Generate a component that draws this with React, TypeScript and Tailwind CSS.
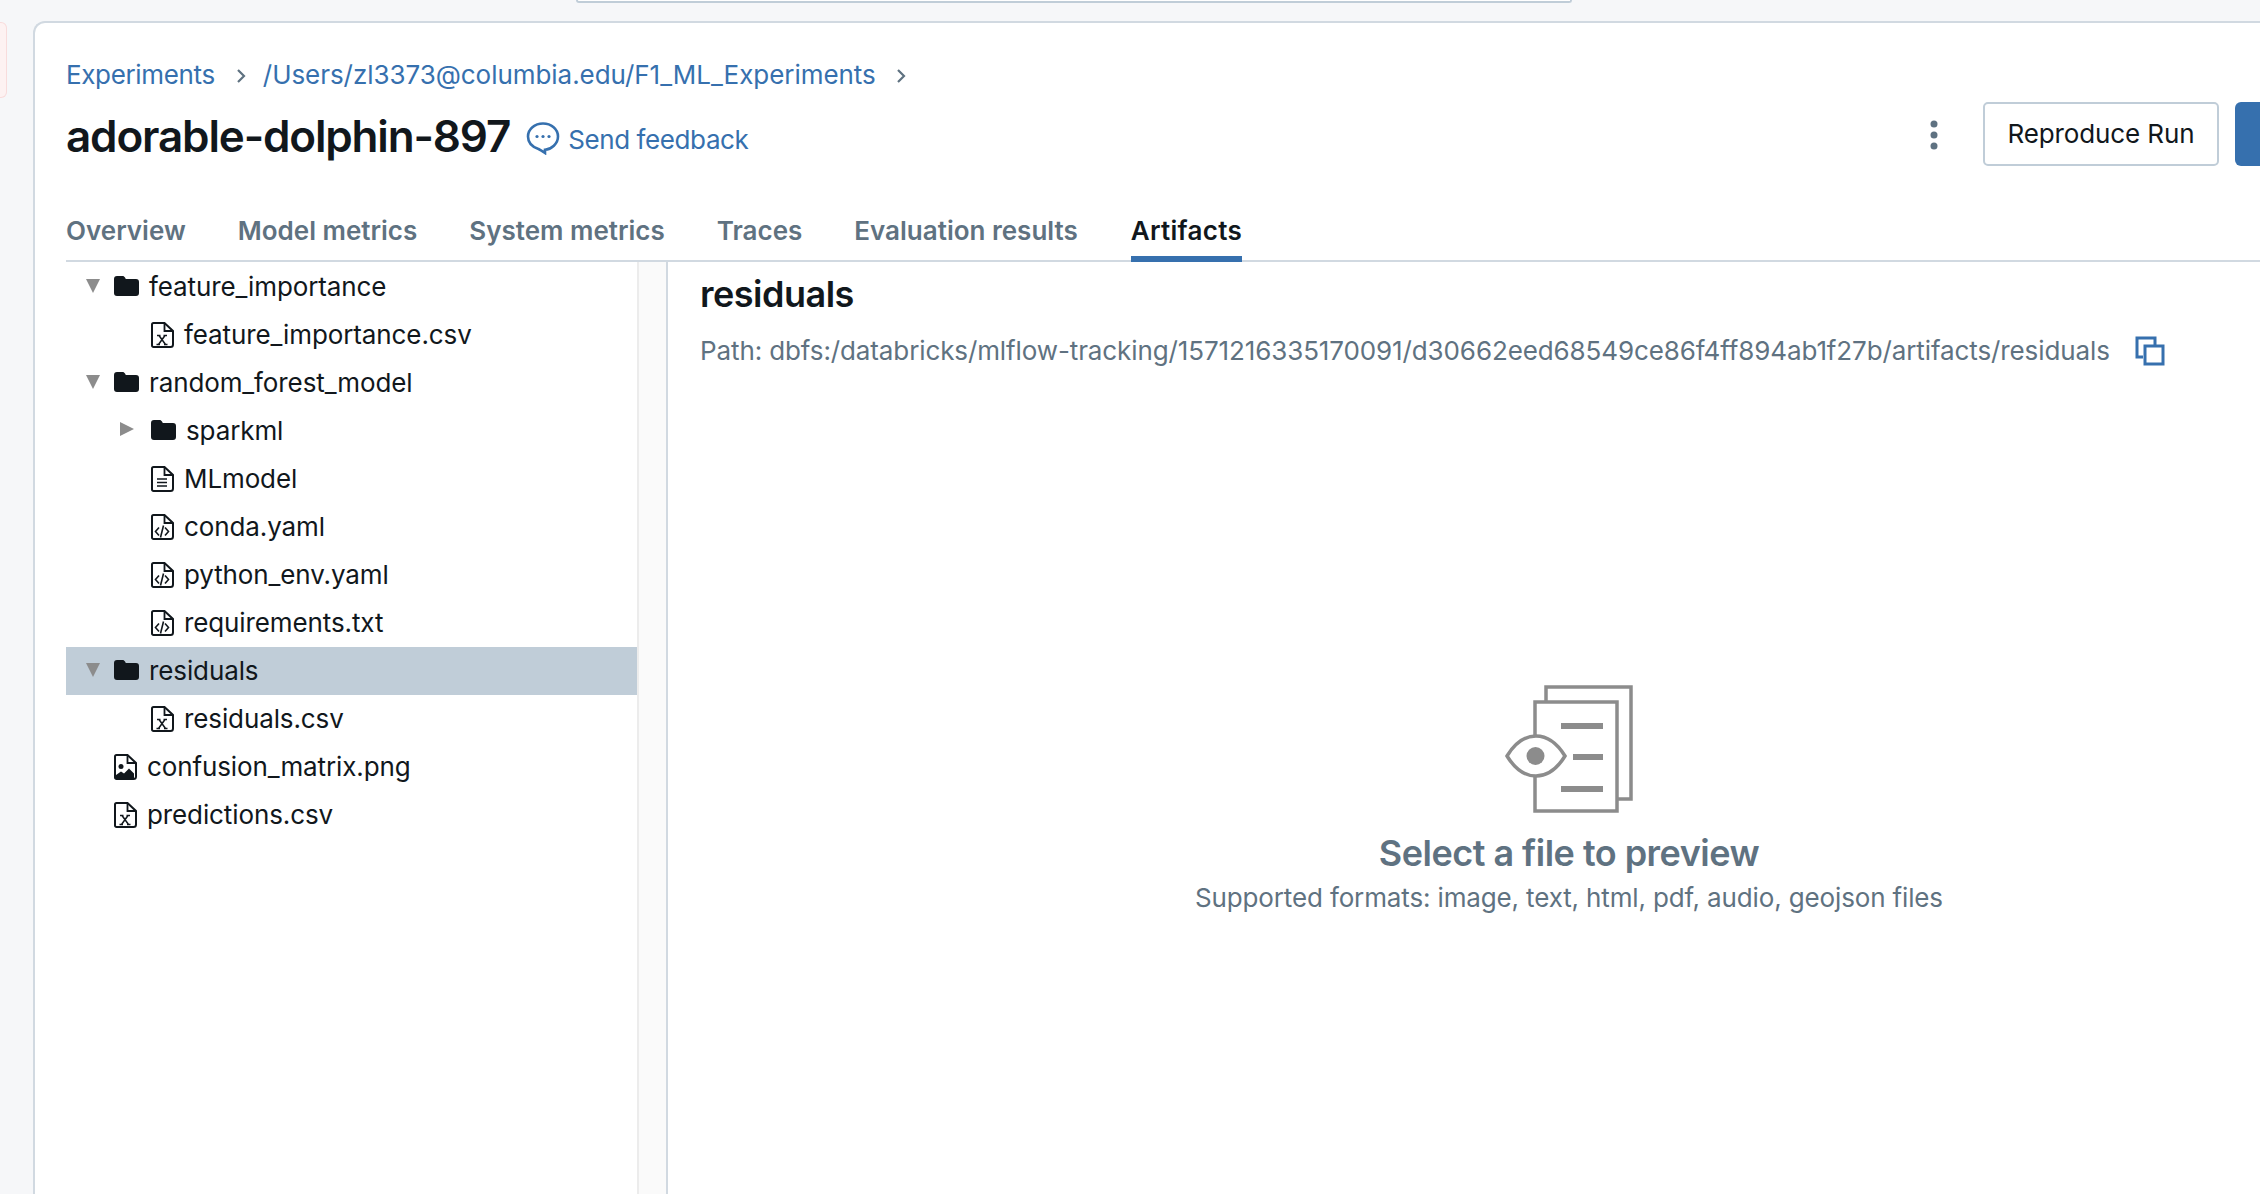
import type { ReactNode } from "react";

type FileKind = "csv" | "text" | "code" | "image";

type TreeRow = {
  name: string;
  kind: "open" | "closed" | FileKind;
  depth: number;
  selected?: boolean;
};

const TABS = ["Overview", "Model metrics", "System metrics", "Traces", "Evaluation results", "Artifacts"];

const ROWS: TreeRow[] = [
  { name: "feature_importance", kind: "open", depth: 0 },
  { name: "feature_importance.csv", kind: "csv", depth: 1 },
  { name: "random_forest_model", kind: "open", depth: 0 },
  { name: "sparkml", kind: "closed", depth: 1 },
  { name: "MLmodel", kind: "text", depth: 1 },
  { name: "conda.yaml", kind: "code", depth: 1 },
  { name: "python_env.yaml", kind: "code", depth: 1 },
  { name: "requirements.txt", kind: "code", depth: 1 },
  { name: "residuals", kind: "open", depth: 0, selected: true },
  { name: "residuals.csv", kind: "csv", depth: 1 },
  { name: "confusion_matrix.png", kind: "image", depth: 0 },
  { name: "predictions.csv", kind: "csv", depth: 0 },
];

function Chevron() {
  return (
    <svg width="12" height="18" viewBox="0 0 12 18" fill="none" stroke="#5f7281" strokeWidth="2.2">
      <path d="M3 3l6 6-6 6" />
    </svg>
  );
}

function FolderIcon() {
  return (
    <svg width="25" height="20" viewBox="0 0 25 20" fill="#11171c" className="shrink-0">
      <path d="M3 0h5.5c1.2 0 1.9.6 2.5 1.6l.8 1.4H22a3 3 0 0 1 3 3v11a3 3 0 0 1-3 3H3a3 3 0 0 1-3-3V3a3 3 0 0 1 3-3z" />
    </svg>
  );
}

function FileIcon({ kind }: { kind: FileKind }) {
  let inner: ReactNode = null;
  if (kind === "csv") {
    inner = (
      <path d="M6 13.500h3.500M12.500 13.500h3.500M5.500 22.500h3.500M13 22.500h3.500M8 13.500l6.500 9M14 13.500l-6.500 9" strokeWidth="1.500" />
    );
  } else if (kind === "text") {
    inner = <path d="M6 13h10M6 16.500h10M6 20h10" strokeWidth="1.600" />;
  } else if (kind === "code") {
    inner = <path d="M8 13.500l-3.500 4 3.500 4M14 13.500l3.500 4-3.500 4M12.500 11.500l-3 12" strokeWidth="1.600" />;
  } else {
    inner = (
      <>
        <circle cx="7" cy="12.500" r="2.500" fill="#11171c" stroke="none" />
        <path d="M2 24v-3l5-3.500 3 2 5-5 5 5V24z" fill="#11171c" stroke="none" />
      </>
    );
  }
  return (
    <svg width="23" height="26" viewBox="0 0 23 26" fill="none" stroke="#11171c" className="shrink-0">
      <path d="M2.500 1h11l8.500 8v13.500a2.500 2.500 0 0 1-2.500 2.500h-17A1.500 1.500 0 0 1 1 23.500V2.500A1.500 1.500 0 0 1 2.500 1z" strokeWidth="2" />
      <path d="M13.500 1v8h8.500" strokeWidth="1.800" />
      {inner}
    </svg>
  );
}

function Caret({ open }: { open: boolean }) {
  return (
    <svg width="14" height="14" viewBox="0 0 14 14" fill="#8c8c8c" className="shrink-0">
      {open ? <path d="M0 0h14L7 14z" /> : <path d="M0 0l14 7-14 7z" />}
    </svg>
  );
}

function Row({ row }: { row: TreeRow }) {
  const isFolder = row.kind === "open" || row.kind === "closed";
  let pad = "pl-[48px]";
  if (isFolder && row.depth === 0) pad = "pl-[20px]";
  if (isFolder && row.depth === 1) pad = "pl-[54px]";
  if (!isFolder && row.depth === 1) pad = "pl-[85px]";
  return (
    <div className={`flex h-[48px] items-center whitespace-nowrap text-[#11171c] ${pad} ${row.selected ? "bg-[#c0cdd8]" : ""}`}>
      {row.kind === "open" && (
        <span className="mr-[14px] -mt-[2px]">
          <Caret open />
        </span>
      )}
      {row.kind === "closed" && (
        <span className="mr-[17px] -mt-[4px]">
          <Caret open={false} />
        </span>
      )}
      {isFolder ? (
        <span className="-mt-[2px] mr-[10px]">
          <FolderIcon />
        </span>
      ) : (
        <span className="mr-[10px]">
          <FileIcon kind={row.kind as FileKind} />
        </span>
      )}
      <span>{row.name}</span>
    </div>
  );
}

function EmptyIcon() {
  return (
    <svg width="128" height="128" viewBox="0 0 128 128" fill="none" stroke="#8c8c8c" strokeWidth="3.500">
      <path d="M41 16V2h85v112h-14" />
      <path d="M30 50V17h82v109H30v-34" />
      <path d="M2 71c8-13 18-20 29-20s21 7 29 20c-8 13-18 20-29 20S10 84 2 71z" />
      <circle cx="30.500" cy="71" r="9" fill="#8c8c8c" stroke="none" />
      <path d="M56 41h42M68 72h30M56 104h42" strokeWidth="6" />
    </svg>
  );
}

export default function App() {
  return (
    <div className="flex h-screen flex-col overflow-hidden bg-[#f6f7f9] font-['Inter',sans-serif] text-[26px] leading-[36px] tracking-[-0.11px]">
      <div className="h-[21px] shrink-0">
        <div className="ml-[576px] h-[3px] w-[996px] rounded-b-[6px] border-x-2 border-b-2 border-[#c0cdd8] bg-white" />
      </div>
      <div className="flex min-h-0 flex-1">
        <div className="w-[33px] shrink-0">
          <div className="mt-[1px] h-[76px] w-[7px] rounded-r-[6px] border-y border-r border-[#f8dcdc] bg-[#fdf2f2]" />
        </div>
        <main className="flex min-w-0 flex-1 flex-col rounded-tl-[12px] border-l-2 border-t-2 border-[#d1d9e1] bg-white">
          <div className="flex h-[74px] shrink-0 items-end pb-[4px] pl-[31px] pt-[34px] text-[#3670ae]">
            <span className="tracking-[-0.35px]">Experiments</span>
            <span className="ml-[20px] mr-[16px] mb-[8px]">
              <Chevron />
            </span>
            <span className="tracking-[-0.05px]">/Users/zl3373@columbia.edu/F1_ML_Experiments</span>
            <span className="ml-[19px] mb-[8px]">
              <Chevron />
            </span>
          </div>
          <div className="mt-[8px] flex h-[62px] shrink-0 items-center pl-[31px]">
            <h1 className="text-[44px] leading-[56px] font-semibold tracking-[-1.15px] text-[#11171c]">adorable-dolphin-897</h1>
            <svg width="34" height="34" viewBox="0 0 34 34" fill="none" stroke="#3670ae" strokeWidth="2.600" className="ml-[16px] mt-[4px]">
              <path d="M17 2.500c8.300 0 15 5.800 15 13s-6.700 13-13 13.200V32c-1.500-1-4-2.800-6.500-4C6.500 26 2 21.500 2 15.500c0-7.200 6.700-13 15-13z" />
              <circle cx="11" cy="15.500" r="1.600" fill="#3670ae" stroke="none" />
              <circle cx="17" cy="15.500" r="1.600" fill="#3670ae" stroke="none" />
              <circle cx="23" cy="15.500" r="1.600" fill="#3670ae" stroke="none" />
            </svg>
            <span className="ml-[8px] mt-[8px] tracking-[-0.4px] text-[#3670ae]">Send feedback</span>
            <div className="ml-auto flex items-center">
              <svg width="10" height="30" viewBox="0 0 10 30" fill="#5f7281" className="mr-[44px] -mt-[2px]">
                <circle cx="5" cy="4" r="3.500" />
                <circle cx="5" cy="15" r="3.500" />
                <circle cx="5" cy="26" r="3.500" />
              </svg>
              <button className="mb-[4px] h-[64px] w-[236px] rounded-[5px] border-2 border-[#c0cdd8] bg-white text-[#11171c]">Reproduce Run</button>
              <div className="ml-[16px] mb-[4px] h-[64px] w-[40px] -mr-[15px] rounded-l-[6px] bg-[#3670ae]" />
            </div>
          </div>
          <div className="mt-[44px] ml-[31px] flex h-[51px] shrink-0 items-start gap-[52px] border-b-2 border-[#d1d9e1] pt-[2px] font-semibold tracking-normal text-[#5f7281]">
            {TABS.map((tab) =>
              tab === "Artifacts" ? (
                <div key={tab} className="ml-[1px] h-[49px] border-b-[6px] border-[#3670ae] tracking-[0.3px] text-[#11171c]">
                  {tab}
                </div>
              ) : (
                <div key={tab}>{tab}</div>
              ),
            )}
          </div>
          <div className="ml-[31px] flex min-h-0 flex-1">
            <div className="w-[571px] shrink-0 pt-[1px]">
              {ROWS.map((row) => (
                <Row key={row.name} row={row} />
              ))}
            </div>
            <div className="w-[31px] shrink-0 border-x-2 border-l-[#ececec] border-r-[#d1d9e1] bg-[#fafafa]" />
            <div className="flex min-w-0 flex-1 flex-col pl-[32px] pt-[10px]">
              <h2 className="text-[36px] leading-[44px] font-semibold tracking-[-0.5px] text-[#11171c]">residuals</h2>
              <div className="mt-[17px] flex items-center whitespace-nowrap text-[#5f7281]">
                <span>Path: dbfs:/databricks/mlflow-tracking/1571216335170091/d30662eed68549ce86f4ff894ab1f27b/artifacts/residuals</span>
                <svg width="30" height="30" viewBox="0 0 30 30" fill="none" stroke="#3670ae" strokeWidth="3" className="ml-[25px] -mt-[1px] shrink-0">
                  <path d="M8 21H2V2h18v7" />
                  <rect x="10" y="10" width="18" height="18" />
                </svg>
              </div>
              <div className="mt-[316px] flex w-[1738px] flex-col items-center">
                <EmptyIcon />
                <h3 className="mt-[18px] text-[36px] leading-[44px] font-semibold tracking-[-0.52px] text-[#5f7281]">Select a file to preview</h3>
                <p className="mt-[5px] tracking-[-0.14px] text-[#5f7281]">Supported formats: image, text, html, pdf, audio, geojson files</p>
              </div>
            </div>
          </div>
        </main>
      </div>
    </div>
  );
}
